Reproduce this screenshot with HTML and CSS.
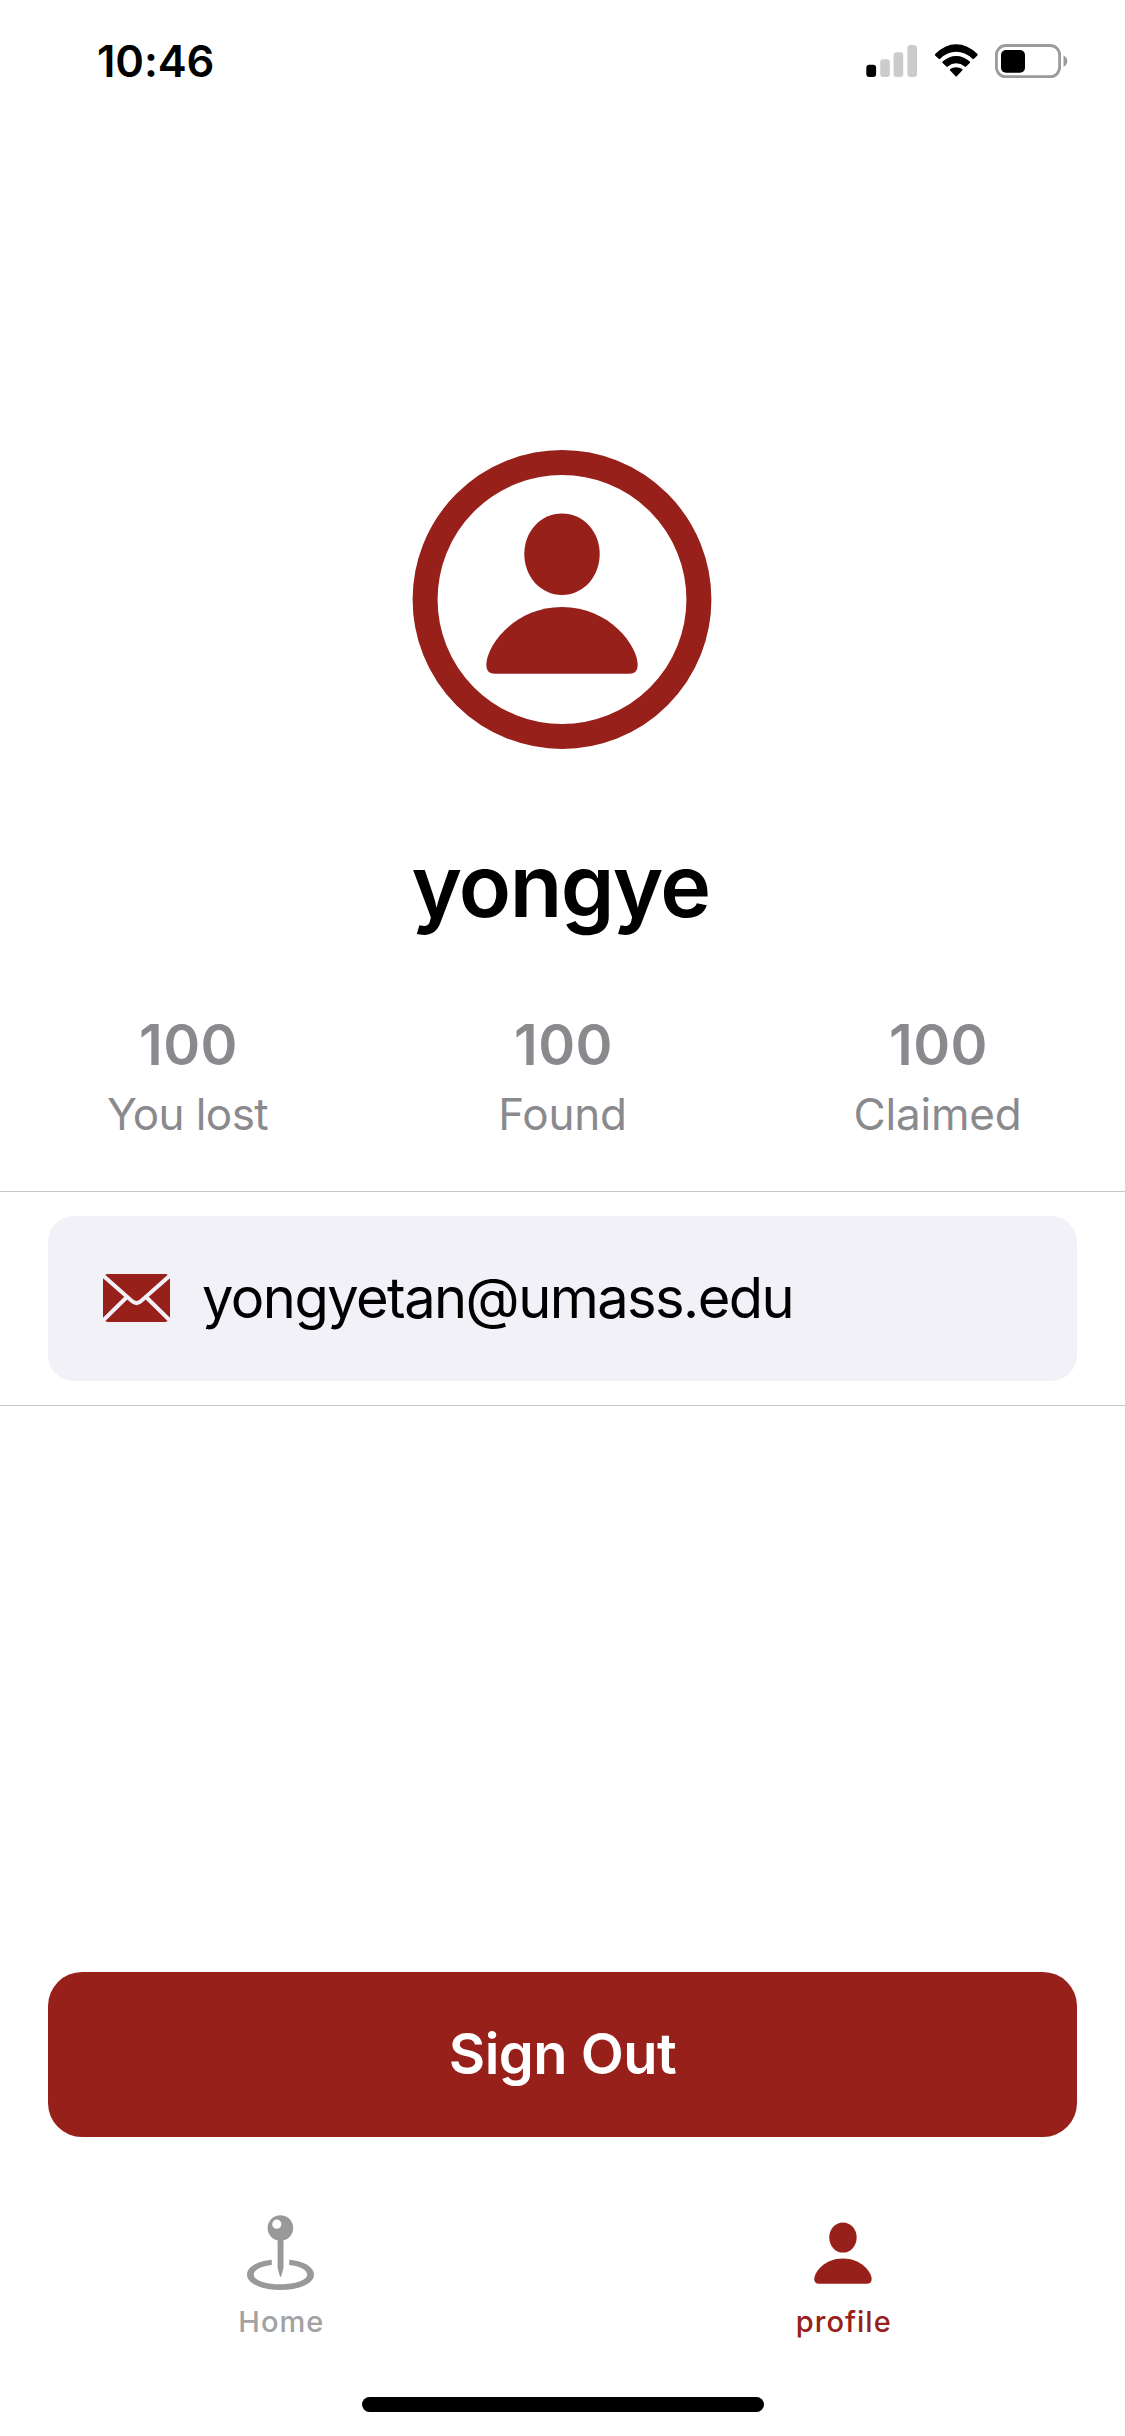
FILE: index.html
```html
<!DOCTYPE html>
<html lang="en">
<head>
<meta charset="utf-8">
<title>Profile</title>
<link rel="stylesheet" href="styles.css">
</head>
<body>
<div class="screen">
  <header class="status">
    <span class="time">10:46</span>
    <svg class="status-icons" width="204" height="36" viewBox="865 43 204 36">
      <rect x="866.3" y="64.7" width="9.8" height="12.3" rx="3"/>
      <g fill="#cbcbcb">
        <rect x="880.2" y="59.3" width="9.6" height="17.7" rx="3"/>
        <rect x="893.6" y="52.2" width="9.6" height="24.8" rx="3"/>
        <rect x="907.4" y="45" width="9.6" height="32" rx="3"/>
      </g>
      <path d="M935.2 54.1Q945 44.3 956.2 44.3T977.5 54.1Q978 54.8 977.4 55.5L974 58.8Q973.2 59.4 972.4 58.7Q965 51.8 956.2 51.8T940.2 58.7Q939.4 59.4 938.7 58.8L935.1 55.5Q934.5 54.8 935.2 54.1Z"/>
      <path d="M942.6 61.6Q948.7 56 956.2 56T969.8 61.6Q970.5 62.3 969.8 63L966.1 66.6Q965.4 67.2 964.7 66.6Q960.8 63.3 956.2 63.3T947.8 66.6Q947.1 67.2 946.4 66.6L942.6 63Q942 62.3 942.6 61.6Z"/>
      <path d="M950.2 69.1Q952.8 67.2 956.2 67.2T962.2 69.1Q962.9 69.8 962.2 70.6L956.8 76.3Q956.2 77 955.6 76.3L950.1 70.6Q949.5 69.8 950.2 69.1Z"/>
      <rect x="996.4" y="45.5" width="63.2" height="31.2" rx="9.5" fill="none" stroke="#9b9b9b" stroke-width="2.8"/>
      <rect x="1001" y="50" width="24" height="22.8" rx="5"/>
      <path d="M1063.5 55.5Q1067.3 57 1067.3 61.1T1063.5 66.8Z" fill="#9b9b9b"/>
    </svg>
  </header>

  <main class="profile">
    <svg class="avatar" width="300" height="300" viewBox="0 0 300 300">
      <circle cx="150" cy="149.5" r="136.9" fill="none" stroke="currentColor" stroke-width="25"/>
      <path fill="currentColor" d="M150 63.4C171 63.4 187.7 81 187.7 104C187.7 127 171 145 150 145S112.3 127 112.3 104C112.3 81 129 63.4 150 63.4Z"/>
      <path fill="currentColor" d="M150 157C198 157 225.7 196 225.7 215Q225.7 223.7 217 223.7H83Q74.3 223.7 74.3 215C74.3 196 102 157 150 157Z"/>
    </svg>
    <h1 class="name">yongye</h1>

    <section class="stats">
      <div class="stat"><span class="count">100</span><span class="label lost">You lost</span></div>
      <div class="stat"><span class="count">100</span><span class="label">Found</span></div>
      <div class="stat"><span class="count">100</span><span class="label">Claimed</span></div>
    </section>

    <section class="contact">
      <div class="card">
        <svg class="mail" width="67" height="48" viewBox="0 0 67 48">
          <rect width="67" height="48" rx="5" fill="currentColor"/>
          <path d="M0 1.5L28.5 26.6Q33.5 31.6 38.5 26.6L67 1.5M0 46.5L24.2 22.8M67 46.5L42.8 22.8" fill="none" stroke="#f2f1f7" stroke-width="4"/>
        </svg>
        <span class="email">yongyetan@umass.edu</span>
      </div>
    </section>
  </main>

  <button class="signout" type="button">Sign Out</button>

  <nav class="tabs">
    <a class="tab home">
      <svg width="68" height="78" viewBox="247 2214 68 78">
        <path fill="currentColor" fill-rule="evenodd" d="M280.4 2215.2a12.8 12.8 0 1 1 0 25.6a12.8 12.8 0 0 1 0-25.6ZM276.8 2219.6a4.6 4.6 0 1 0 0 9.2a4.6 4.6 0 0 0 0-9.2Z"/>
        <path fill="currentColor" d="M277.6 2240H283.5V2268L281.3 2276Q280.5 2278 279.8 2276L277.6 2268Z"/>
        <path fill="currentColor" d="M271.8 2259.8C257 2261.2 247 2267 247 2274.7C247 2283.5 262 2290 280.5 2290S314 2283.5 314 2274.7C314 2267 304 2261.2 289.2 2259.8V2265.1C300 2266.3 307.2 2270 307.2 2274.7C307.2 2280 295.5 2284.2 280.5 2284.2S253.8 2280 253.8 2274.7C253.8 2270 261 2266.3 271.8 2265.1Z"/>
      </svg>
      <span class="tab-text">Home</span>
    </a>
    <a class="tab active">
      <svg width="68" height="78" viewBox="809.75 2214 68 78">
        <path fill="currentColor" d="M842.7 2222.5C850.4 2222.5 856.4 2228.9 856.4 2237.4S850.4 2252.6 842.7 2252.6S829 2245.9 829 2237.4S835 2222.5 842.7 2222.5Z"/>
        <path fill="currentColor" d="M842.7 2258.4C861 2258.4 871.4 2272 871.4 2279Q871.4 2283.8 866.6 2283.8H818.8Q814 2283.8 814 2279C814 2272 824.4 2258.4 842.7 2258.4Z"/>
      </svg>
      <span class="tab-text">profile</span>
    </a>
  </nav>
  <div class="indicator"></div>
</div>
</body>
</html>
```
FILE: styles.css
```css
* { box-sizing: border-box; }

body {
  margin: 0;
  background: #fff;
  color: #000;
  font-family: Inter, "Liberation Sans", sans-serif;
}

.screen {
  width: 1125px;
  height: 2436px;
  display: flex;
  flex-direction: column;
  align-items: center;
  overflow: hidden;
}

.status {
  width: 100%;
  height: 132px;
  padding: 31px 56px 0 97px;
  display: flex;
  justify-content: space-between;
  align-items: flex-start;
}

.time {
  font-size: 43.5px;
  line-height: 60px;
  font-weight: 600;
  letter-spacing: -0.1px;
}

.status-icons { margin-top: 12px; }

.profile {
  width: 100%;
  padding-top: 318px;
  display: flex;
  flex-direction: column;
  align-items: center;
}

.avatar {
  display: block;
  margin-right: 1px;
  color: #97201b;
}

.name {
  margin: 84px 0 0;
  padding-right: 4px;
  font-size: 86px;
  line-height: 104px;
  font-weight: 600;
  letter-spacing: -1.6px;
}

.stats {
  width: 100%;
  margin-top: 74px;
  display: grid;
  grid-template-columns: repeat(3, 1fr);
  color: #8a8a8e;
}

.stat {
  display: flex;
  flex-direction: column;
  align-items: center;
  gap: 10px;
}

.count {
  padding-left: 2px;
  font-size: 56px;
  line-height: 66px;
  font-weight: 600;
  letter-spacing: 0.5px;
}

.label {
  font-size: 44px;
  line-height: 52px;
  letter-spacing: -0.2px;
}

.lost { letter-spacing: -0.6px; }

.contact {
  width: 100%;
  margin-top: 51px;
  padding: 24px 48px;
  border-top: 1px solid #c6c6c8;
  border-bottom: 1px solid #c6c6c8;
}

.card {
  height: 165px;
  padding: 0 0 1px 55px;
  display: flex;
  align-items: center;
  gap: 32px;
  background: #f2f1f7;
  border-radius: 26px;
}

.mail {
  color: #97201b;
}

.email {
  padding-bottom: 1px;
  font-size: 56px;
  line-height: 66px;
  letter-spacing: -1.55px;
}

.signout {
  width: 1029px;
  height: 165px;
  margin: 566px 0 0;
  padding: 0 0 2px;
  border: 0;
  border-radius: 34px;
  background: #97201b;
  color: #fff;
  font-family: inherit;
  font-size: 56px;
  line-height: 66px;
  font-weight: 600;
  letter-spacing: -0.5px;
}

.tabs {
  width: 100%;
  margin-top: 77px;
  display: grid;
  grid-template-columns: repeat(2, 1fr);
}

.tab {
  display: flex;
  flex-direction: column;
  align-items: center;
  gap: 12px;
  font-size: 29px;
  line-height: 36px;
  font-weight: 500;
  letter-spacing: 1px;
}

.home { color: #999; }
.home .tab-text { color: #a2a2a2; }
.active { color: #97201b; }

.indicator {
  width: 402px;
  height: 15px;
  margin-top: 57px;
  border-radius: 8px;
  background: #000;
}
```
